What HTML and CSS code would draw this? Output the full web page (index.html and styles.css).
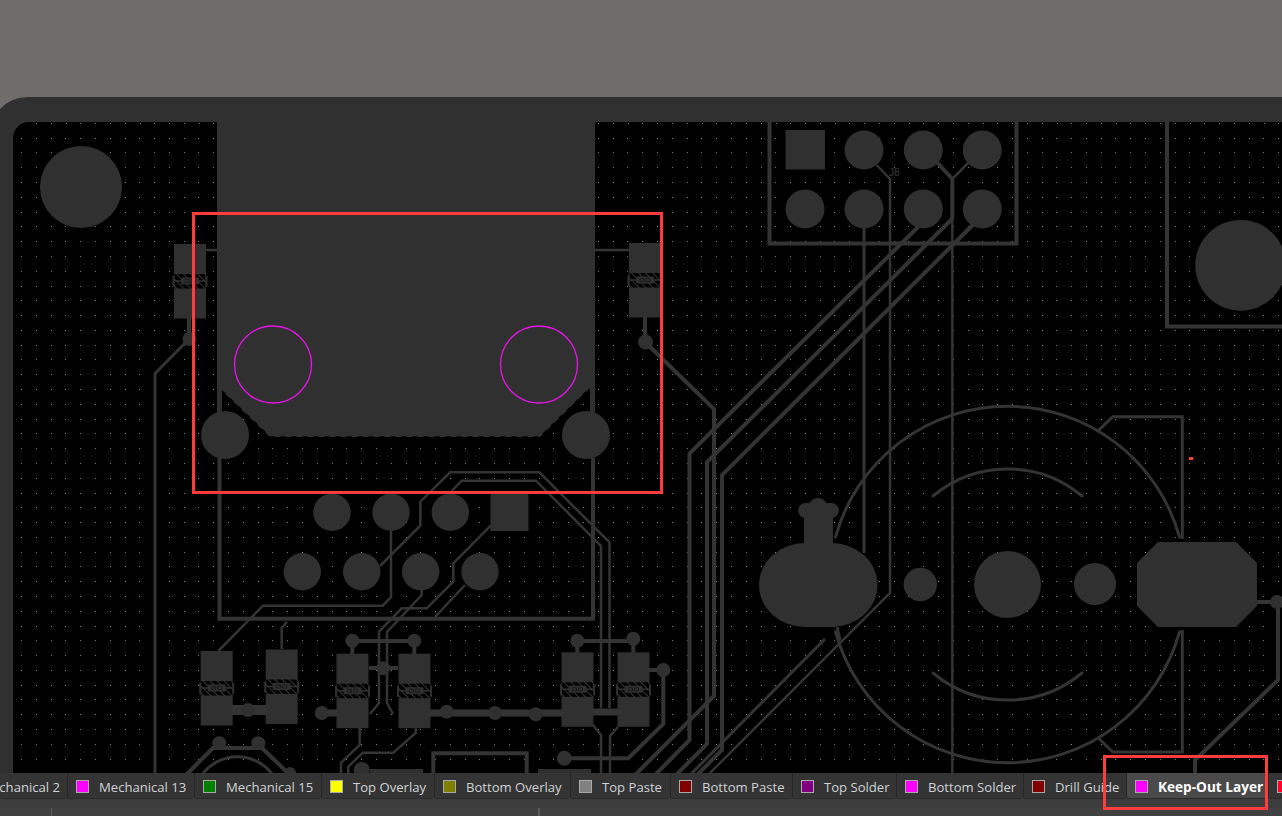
FILE: index.html
```html
<!DOCTYPE html>
<html lang="en">
<head>
<meta charset="utf-8">
<title>PCB layer view</title>
<link rel="stylesheet" href="styles.css">
</head>
<body>
<div class="app">
  <svg class="canvas" width="1282" height="773" viewBox="0 0 1282 773" xmlns="http://www.w3.org/2000/svg">
    <defs>
      <pattern id="hatch" width="5" height="5" patternUnits="userSpaceOnUse" patternTransform="rotate(-45)">
        <rect width="5" height="5" fill="#000"/>
        <rect width="0.7" height="5" fill="#505050"/>
      </pattern>
      <g id="pad">
        <rect class="cu" width="32" height="74.5"/>
        <rect y="30" x="0.5" width="31" height="14.5" fill="url(#hatch)"/>
        <rect class="cu" x="-1.5" y="32" width="2" height="11"/>
        <rect class="cu" x="31.5" y="32" width="2" height="11"/>
        <path class="t1" d="M1 37H8M24 37H31"/>
        <rect class="cu" x="7" y="33.5" width="18" height="7" rx="1"/>
        <path class="pad-slot" d="M11 35.500h4v3h-4zM17 35.500h4v3h-4z"/>
      </g>
    </defs>

    <path class="cu" d="M0 109A38.7 38.7 0 0 1 28 97H1282V773H0Z"/>
    <path class="hole" d="M13 773V138A16 16 0 0 1 29 122H1282V773Z"/>

    <path class="dots" d="M36 123.500H1282M21 138.500H1282M21 152.500H1282M21 167.500H1282M21 182.500H1282M21 197.500H1282M21 212.500H1282M21 226.500H1282M21 241.500H1282M21 256.500H1282M21 271.500H1282M21 286.500H1282M21 300.500H1282M21 315.500H1282M21 330.500H1282M21 345.500H1282M21 359.500H1282M21 374.500H1282M21 389.500H1282M21 404.500H1282M21 419.500H1282M21 433.500H1282M21 448.500H1282M21 463.500H1282M21 478.500H1282M21 493.500H1282M21 507.500H1282M21 522.500H1282M21 537.500H1282M21 552.500H1282M21 566.500H1282M21 581.500H1282M21 596.500H1282M21 611.500H1282M21 626.500H1282M21 640.500H1282M21 655.500H1282M21 670.500H1282M21 685.500H1282M21 699.500H1282M21 714.500H1282M21 729.500H1282M21 744.500H1282M21 759.500H1282"/>

    <!-- large connector body -->
    <path class="cu" d="M217 122H595V420H590V388L540 437H270L222 391V420H217Z"/>
    <path class="notch" d="M222 391L270 437H540L590 388"/>
    <circle class="cu" cx="225" cy="435" r="24"/>
    <circle class="cu" cx="586" cy="435" r="24"/>
    <circle class="keepout" cx="273" cy="364.500" r="38.500"/>
    <circle class="keepout" cx="539" cy="364.500" r="38.500"/>
    <circle class="cu" cx="81" cy="187" r="41"/>

    <!-- side parts of the large connector -->
    <path class="t2" d="M206 250H217M595 250H629"/>
    <path class="t4" d="M189 317V339M645 316V342"/>
    <path class="t3" d="M188 340L155 373.500V773"/>
    <path class="t4" d="M645 342L714 409V696L633 777"/>
    <circle class="cu" cx="189.500" cy="339" r="7"/>
    <circle class="cu" cx="645.500" cy="342" r="7.500"/>
    <use href="#pad" x="174" y="244"/>
    <use href="#pad" x="629" y="243"/>

    <!-- J8 header -->
    <path class="t4" d="M769.500 122V243.500H1016.500V122"/>
    <rect class="cu" x="785.500" y="130" width="39.500" height="39.500"/>
    <circle class="cu" cx="864" cy="150" r="19.500"/>
    <circle class="cu" cx="923.300" cy="150" r="19.500"/>
    <circle class="cu" cx="982.300" cy="150" r="19.500"/>
    <circle class="cu" cx="805" cy="209" r="19.500"/>
    <circle class="cu" cx="864" cy="209" r="19.500"/>
    <circle class="cu" cx="923.300" cy="209" r="19.500"/>
    <circle class="cu" cx="982.300" cy="209" r="19.500"/>
    <text class="ref" x="889" y="176">J8</text>
    <path class="t2" d="M876.700 165L890 179V593L705 778"/>
    <path class="t4" d="M936.700 162L952.300 179V218"/>
    <path class="t2" d="M968 163L952.300 179V773"/>
    <path class="t3" d="M864 228V553"/>
    <path class="t3" d="M825 639L690 775"/>
    <path class="t4" d="M918 227L689.500 453.500V740L656 774"/>
    <path class="t4" d="M953 218L707 462V744L672 779"/>
    <path class="t4" d="M972.700 225L722 475V750L695 777"/>

    <!-- barrel jack -->
    <path class="arc3" d="M835.500 537A178.500 178.500 0 0 1 1179.500 537"/>
    <path class="arc3" d="M835.500 632A178.500 178.500 0 0 0 1179.500 632"/>
    <path class="arc3" d="M933 496A116 116 0 0 1 1082 496"/>
    <path class="arc3" d="M933 673A116 116 0 0 0 1082 673"/>
    <path class="t3" d="M1098.300 430.700L1112.700 416.700H1182.300V539"/>
    <path class="t3" d="M1098.300 738L1112.700 752H1182.300V630"/>
    <circle class="cu" cx="1007.500" cy="584.500" r="33.500"/>
    <circle class="cu" cx="920.300" cy="584.500" r="16.700"/>
    <circle class="cu" cx="1095" cy="584" r="21"/>
    <rect class="cu" x="759" y="543" width="118.500" height="84" rx="46" ry="42"/>
    <rect class="cu" x="804" y="505" width="29" height="42"/>
    <rect class="cu" x="798" y="503" width="41" height="15" rx="7.500"/>
    <circle class="cu" cx="818" cy="508" r="10"/>
    <path class="t3" d="M837 627L840 640"/>
    <polygon class="cu" points="1158,542 1236,542 1257,563 1257,606 1236,627 1158,627 1137,606 1137,563"/>
    <path class="t4" d="M1257 602H1278V680L1195 760V773"/>
    <circle class="cu" cx="1277" cy="602" r="7"/>
    <rect class="mark" x="1189" y="457" width="4" height="3"/>

    <!-- top right part -->
    <path class="t4" d="M1167 122V326.500H1282"/>
    <circle class="cu" cx="1240.700" cy="265.300" r="45.400"/>

    <!-- lower connector -->
    <path class="t4" d="M219.500 458V618.700H593V458"/>
    <circle class="cu" cx="332" cy="512.300" r="18.700"/>
    <circle class="cu" cx="391" cy="512.300" r="18.700"/>
    <circle class="cu" cx="450.300" cy="512.300" r="18.700"/>
    <rect class="cu" x="490.500" y="493" width="38" height="38"/>
    <circle class="cu" cx="302.300" cy="571.700" r="18.700"/>
    <circle class="cu" cx="361.700" cy="571.700" r="18.700"/>
    <circle class="cu" cx="420.700" cy="571.700" r="18.700"/>
    <circle class="cu" cx="480" cy="571.700" r="18.700"/>
    <path class="t2" d="M218.300 651L263 605.700H382.700L391 597V531"/>
    <path class="t2" d="M380 566L420.300 525.700V501.700L450 472.300H539.300L609.500 542.300V708"/>
    <path class="t2" d="M451.700 491L461.700 480.700H536L601 546V708"/>
    <path class="t2" d="M490.700 525.700L453.300 563.300V581.700L426.700 608.300H401.700L379 631.700V703L370 714"/>
    <path class="t2" d="M421.700 590V595L387 632V703L393 714"/>
    <path class="t2" d="M465 585L435 617"/>
    <path class="t2" d="M287 621.700L281.700 628V649"/>

    <!-- resistor pads -->
    <use href="#pad" x="200.700" y="651"/>
    <use href="#pad" x="265.700" y="649.500"/>
    <path class="t9" d="M232 710H266"/>
    <circle class="cu" cx="248" cy="710" r="7"/>

    <path class="t4" d="M369 668H398"/>
    <circle class="cu" cx="383.300" cy="668.300" r="7"/>
    <path class="t4" d="M352.300 641H414.300M352.300 641V654M414.300 641V654"/>
    <circle class="cu" cx="352.300" cy="640.700" r="7"/>
    <circle class="cu" cx="414.300" cy="640.700" r="7"/>
    <use href="#pad" x="336.500" y="653.700"/>
    <use href="#pad" x="398.500" y="653.700"/>
    <path class="t6" d="M321.700 713H337M430 713H562"/>
    <circle class="cu" cx="321.700" cy="713" r="7"/>
    <circle class="cu" cx="446.700" cy="711.700" r="7"/>
    <circle class="cu" cx="495" cy="713" r="7"/>
    <circle class="cu" cx="535.700" cy="714.300" r="7"/>

    <path class="t4" d="M577.300 641H633.300M577.300 641V653M633.300 639V653"/>
    <circle class="cu" cx="577.300" cy="640.700" r="7"/>
    <circle class="cu" cx="633.300" cy="638.700" r="7"/>
    <path class="t6" d="M593 712H618"/>
    <path class="t2" d="M593 725L601 735V773M618 727L610 736V773"/>
    <use href="#pad" x="561.500" y="652.300"/>
    <use href="#pad" x="617.500" y="652.300"/>
    <path class="t4" d="M649 670H663.300V724L628.300 758.300H564.300"/>
    <circle class="cu" cx="663.300" cy="670" r="7"/>
    <circle class="cu" cx="564.300" cy="758.300" r="7.500"/>

    <!-- traces along the lower edge -->
    <path class="t2" d="M359.700 728V745L341 762.700V773"/>
    <path class="t2" d="M415.700 728V733L393.300 752.700H362.700L348.300 766.700V773"/>
    <path class="t4" d="M433.300 775V753.300H526.700V775"/>
    <circle class="cu" cx="361.700" cy="770" r="8"/>
    <rect class="cu" x="370" y="769" width="53" height="5"/>
    <rect class="cu" x="538" y="769" width="53" height="5"/>
    <path class="t4" d="M186 775L213 748H262L290 775"/>
    <circle class="cu" cx="219.300" cy="743.300" r="7"/>
    <circle class="cu" cx="258.300" cy="743.300" r="7"/>
    <circle class="cu" cx="290" cy="773" r="6"/>
    <path class="t3" d="M201.700 775A44 44 0 0 1 273 775"/>
  </svg>

  <div class="tabs">
    <div class="tab tab-first"><span class="swatch fuchsia"></span><span>Mechanical 2</span></div>
    <div class="tab"><span class="swatch fuchsia"></span><span>Mechanical 13</span></div>
    <div class="tab"><span class="swatch green"></span><span>Mechanical 15</span></div>
    <div class="tab"><span class="swatch yellow"></span><span>Top Overlay</span></div>
    <div class="tab"><span class="swatch olive"></span><span>Bottom Overlay</span></div>
    <div class="tab"><span class="swatch grey"></span><span>Top Paste</span></div>
    <div class="tab"><span class="swatch maroon"></span><span>Bottom Paste</span></div>
    <div class="tab"><span class="swatch purple"></span><span>Top Solder</span></div>
    <div class="tab"><span class="swatch fuchsia"></span><span>Bottom Solder</span></div>
    <div class="tab"><span class="swatch maroon"></span><span>Drill Guide</span></div>
    <div class="tab tab-active"><span class="swatch fuchsia"></span><span>Keep-Out Layer</span></div>
    <div class="tab"><span class="swatch red"></span></div>
  </div>

  <div class="gutter"></div>
  <div class="status">
    <div class="status-cell status-a"></div>
    <div class="status-cell status-b"></div>
    <div class="status-cell"></div>
  </div>

  <div class="callout callout-main"></div>
  <div class="callout callout-tab"></div>
</div>
</body>
</html>
```
FILE: styles.css
```css
* { box-sizing: border-box; }
html, body { margin: 0; height: 100%; overflow: hidden; }
body { background: #3c3c3c; font-family: "Open Sans", "Liberation Sans", sans-serif; }

.app {
  position: relative;
  display: flex;
  flex-direction: column;
  width: 1282px;
  height: 816px;
  overflow: hidden;
}

.canvas { display: block; flex: none; background: #706c6a; }
.cu { fill: #303030; }
.hole { fill: #000; }
.dots {
  fill: none;
  stroke: #808080;
  stroke-width: 1;
  stroke-dasharray: 1 13.79;
  shape-rendering: crispEdges;
}
.t1, .t2, .t3, .t4, .t6, .t9, .arc3 { fill: none; stroke: #343434; stroke-linejoin: miter; }
.t1 { stroke-width: 1.5; }
.t2 { stroke-width: 2.5; }
.t3 { stroke-width: 3; }
.t4 { stroke-width: 4; }
.t6 { stroke-width: 7; }
.t9 { stroke-width: 10; }
.arc3 { stroke-width: 3; stroke-linecap: round; }
.notch { fill: none; stroke: #000; stroke-width: 1.6; stroke-dasharray: 5 6; }
.pad-slot { fill: none; stroke: #111; stroke-width: 0.7; }
.keepout { fill: none; stroke: #e814e8; stroke-width: 1.3; }
.mark { fill: #ff3c3c; }
.ref { fill: #3a3a3a; font: 10px "Liberation Sans", sans-serif; }

.tabs {
  display: grid;
  grid-template-columns: 67px 127px 127px 113px 136px 100px 122px 104px 127px 103px 142px 1fr;
  flex: none;
  height: 26px;
  overflow: hidden;
  background: #3c3c3c;
}
.tab {
  display: flex;
  align-items: center;
  gap: 10px;
  min-width: 0;
  padding: 2px 0 0 8px;
  overflow: hidden;
  white-space: nowrap;
  color: #cfd3d6;
  font-size: 13.1px;
  background: #343434;
  border-left: 1px solid #262626;
  border-bottom: 1px solid #2a2a2a;
  border-radius: 0 0 3px 3px;
}
.tab-first { justify-content: flex-end; padding: 2px 7px 0 0; border-left: 0; }
.tab-active { color: #fff; font-size: 13.6px; font-weight: 700; background: #4a4a4a; }
.swatch { flex: none; width: 13px; height: 13px; border: 1px solid #a9a9a9; }
.fuchsia { background: #ff00ff; }
.green { background: #008000; }
.yellow { background: #ffff00; }
.olive { background: #808000; }
.grey { background: #808080; }
.maroon { background: #800000; }
.purple { background: #800080; }
.red { background: #ff002a; }

.gutter { flex: none; height: 9px; background: #3c3c3c; }
.status { display: flex; flex: 1; background: #404040; }
.status-cell { border-right: 1px solid #595959; }
.status-a { width: 52px; }
.status-b { width: 487px; }

.callout { position: absolute; border: 3px solid #ff3b3b; }
.callout-main { left: 192px; top: 212px; width: 471px; height: 282px; }
.callout-tab { left: 1103px; top: 755px; width: 165px; height: 55px; }
```
